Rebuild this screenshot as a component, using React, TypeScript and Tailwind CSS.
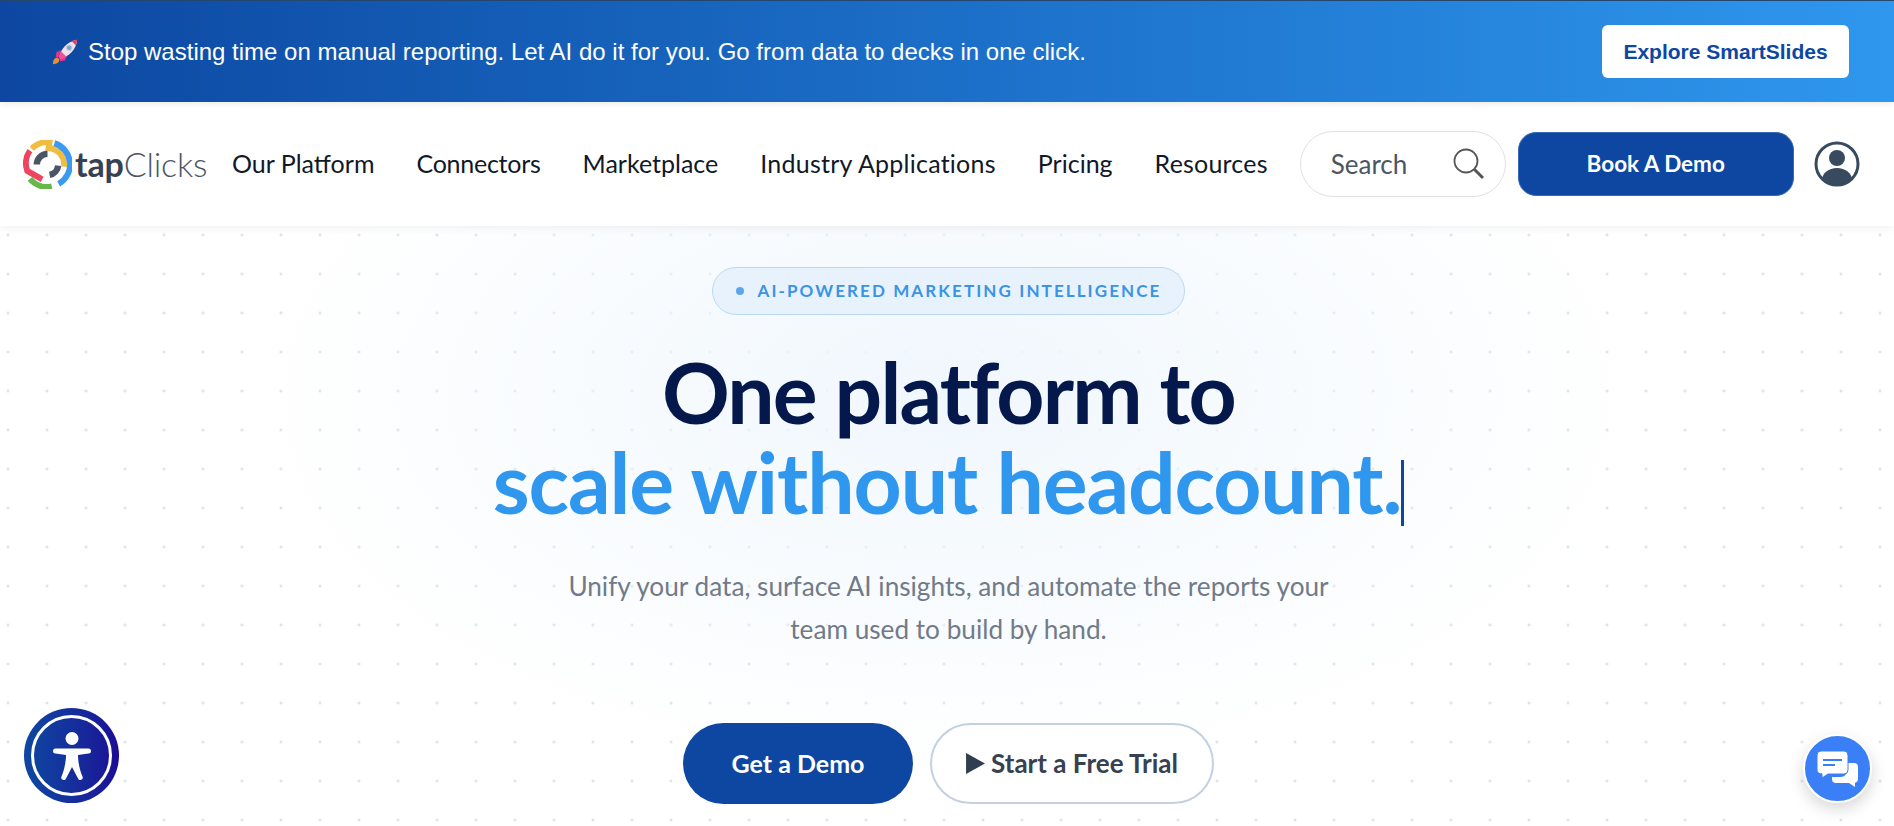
const navLinks = [
  { label: "Our Platform", cls: "" },
  { label: "Connectors", cls: "tracking-[-0.25px]" },
  { label: "Marketplace", cls: "" },
  { label: "Industry Applications", cls: "tracking-[0.25px]" },
  { label: "Pricing", cls: "" },
  { label: "Resources", cls: "tracking-[0.2px]" },
];

function Rocket() {
  return (
    <svg viewBox="0 0 30 30" className="w-[28px] h-[28px] shrink-0">
      <path d="M2 28c0-4 2-7 5-7l2 2c0 3-3 5-7 5z" fill="#e8912c" />
      <path d="M6 15l5-2-3 8-3-1z" fill="#e8338a" />
      <path d="M15 24l2-5-8 3 1 3z" fill="#e8338a" />
      <path d="M9 21C10 12 17 4 28 2c-1 11-9 18-18 20z" fill="#f3dfe6" />
      <path d="M22 3.2L28 2c-.2 2-.6 4-1.400 5.800z" fill="#ee3b5b" />
      <path d="M8.500 20C9 18 10 16 11 14.500l5.500 5.500c-1.500 1-3.500 1.900-5.500 2.400z" fill="#f0509a" />
      <circle cx="19.500" cy="10.500" r="3" fill="#7fa6d8" stroke="#c9d5e8" strokeWidth="1" />
    </svg>
  );
}

function Logo() {
  return (
    <div className="flex items-center w-[185px] shrink-0">
      <svg viewBox="1 1 46 46" className="w-[49px] h-[49px] shrink-0" fill="none" strokeWidth="5.500">
        <path d="M9.200 9.200A21 21 0 0 1 26 3.100L25 8.500A15.500 15.500 0 0 1 39.500 26" stroke="#f0bd42" />
        <path d="M30.500 3.900A21 21 0 0 1 34.500 42.200" stroke="#3b9af0" />
        <path d="M7.500 37.500A21 21 0 0 0 28 44.600" stroke="#66b84a" />
        <path d="M7.500 11A21 21 0 0 0 5 30L19 38" stroke="#ef4460" />
        <path d="M14 24A10 10 0 0 1 24 14" stroke="#4b5563" strokeWidth="6" />
        <path d="M34 25A10 10 0 0 1 26 33.800" stroke="#4b5563" strokeWidth="6" />
      </svg>
      <span className="ml-[3px] text-[34px] leading-none text-[#374151] tracking-[-0.2px]">
        <span className="font-bold">tap</span>
        <span className="font-light text-[#4b5563]">Clicks</span>
      </span>
    </div>
  );
}

function SearchIcon() {
  return (
    <svg viewBox="0 0 32 32" className="w-[32px] h-[32px] shrink-0" fill="none" stroke="#555">
      <circle cx="13" cy="13" r="11.500" strokeWidth="1.800" />
      <path d="M21.500 21.500l8.500 8.500" strokeWidth="3" />
    </svg>
  );
}

function UserIcon() {
  return (
    <svg viewBox="0 0 46 46" className="w-[46px] h-[46px]">
      <defs>
        <clipPath id="userClip">
          <circle cx="23" cy="23" r="20.500" />
        </clipPath>
      </defs>
      <circle cx="23" cy="23" r="21" fill="white" stroke="#374a5e" strokeWidth="3" />
      <circle cx="23" cy="17" r="8" fill="#374a5e" />
      <ellipse cx="23" cy="39" rx="15" ry="12" fill="#374a5e" clipPath="url(#userClip)" />
    </svg>
  );
}

function A11yButton() {
  return (
    <div className="fixed left-[24px] bottom-[23px] w-[95px] h-[95px] rounded-full bg-gradient-to-r from-[#0d47a1] to-[#1b0a96] flex items-center justify-center">
      <div className="w-[81px] h-[81px] rounded-full border-[3px] border-white flex items-center justify-center">
        <svg viewBox="0 0 38 48" className="w-[38px] h-[48px]" fill="white">
          <circle cx="19" cy="6.500" r="6.500" />
          <path d="M2.500 16.500H35.500a2.500 2.500 0 0 1 0 5L25 23c0 7 2 16 4.500 21.500a2.400 2.400 0 0 1-4.500 2L19 35l-6 11.500a2.400 2.400 0 0 1-4.500-2C11 39 13 30 13 23L2.500 21.500a2.500 2.500 0 0 1 0-5z" />
        </svg>
      </div>
    </div>
  );
}

function ChatButton() {
  return (
    <div className="fixed right-[22px] bottom-[23px] w-[69px] h-[69px] rounded-full bg-[#3b7ff6] border-[2px] border-white shadow-[0_6px_16px_rgba(0,0,0,0.16)] flex items-center justify-center">
      <svg viewBox="0 0 42 36" className="w-[42px] h-[36px]" fill="white">
        <path d="M24 12h13a4 4 0 0 1 4 4v12a4 4 0 0 1-3 3.800V36l-6-4H19a4 4 0 0 1-4-4v-2h9a6 6 0 0 0 6-6v-8z" />
        <path d="M4 0h23a4 4 0 0 1 4 4v15a4 4 0 0 1-4 4H11l-6 4v-4.200A4 4 0 0 1 0 19V4a4 4 0 0 1 4-4z" stroke="#3b7ff6" strokeWidth="1" />
        <path d="M6 8h19v2H6zM6 13h12v2H6z" fill="#3b7ff6" />
      </svg>
    </div>
  );
}

export default function App() {
  return (
    <div className="h-[826px] overflow-hidden bg-white font-['Lato',sans-serif]">
      {/* promo banner */}
      <div className="relative z-20 h-[102px] border-t border-[#24466f] bg-gradient-to-r from-[#0d47a1] to-[#2f97ee] shadow-[0_2px_6px_rgba(0,0,0,0.08)] flex items-center pl-[51px] pr-[45px]">
        <Rocket />
        <p className="ml-[9px] text-[24px] text-white font-['Liberation_Sans',sans-serif]">
          Stop wasting time on manual reporting. Let AI do it for you. Go from data to decks in one click.
        </p>
        <button className="ml-auto h-[53px] w-[247px] rounded-[6px] bg-white text-[#0d47a1] text-[21px] font-bold font-['Liberation_Sans',sans-serif]">
          Explore SmartSlides
        </button>
      </div>

      {/* main nav */}
      <header className="relative z-10 h-[124px] bg-white shadow-[0_2px_8px_rgba(0,0,0,0.06)] flex items-center pl-[23px]">
        <Logo />
        <nav className="ml-[24px] flex items-center gap-[42px] text-[25px] text-[#111827]">
          {navLinks.map((l) => (
            <a key={l.label} className={`whitespace-nowrap ${l.cls}`}>{l.label}</a>
          ))}
        </nav>
        <div className="ml-[32px] w-[206px] h-[66px] rounded-full border border-[#e1e1e1] flex items-center pl-[30px] pr-[20px] justify-between">
          <span className="text-[26px] text-[#4b5563]">Search</span>
          <SearchIcon />
        </div>
        <button className="ml-[12px] w-[276px] h-[64px] rounded-[18px] bg-[#0d47a1] border border-[#3a6bb8] text-white text-[22.5px] font-bold">Book A Demo</button>
        <div className="ml-[20px]"><UserIcon /></div>
      </header>

      {/* hero */}
      <section className="h-[600px] pl-[3px] flex flex-col items-center bg-[radial-gradient(ellipse_700px_380px_at_50%_170px,#f0f7fd,transparent),radial-gradient(circle,#d9dfe6_1.2px,transparent_1.5px)] bg-[size:100%_100%,39px_39px] bg-[position:0_0,-11.5px_-10.5px]">
        <div className="mt-[41px] h-[48px] w-[473px] rounded-full border border-[#bcd9f3] bg-[#e3f0fb]/80 flex items-center justify-center gap-[14px]">
          <span className="w-[8px] h-[8px] rounded-full bg-[#5ba7ef]" />
          <span className="text-[17px] font-bold tracking-[2.1px] uppercase text-[#3b93e6]">AI-Powered Marketing Intelligence</span>
        </div>
        <h1 className="mt-[32px] text-center text-[84px] leading-[90px] font-bold tracking-[-1.1px] text-[#04184c]">
          <span className="tracking-[-1.8px]">One platform to</span>
          <br />
          <span className="text-[#2f97ee] inline-flex items-center">
            scale without headcount.
            <span className="mt-[22px] w-[3px] h-[66px] bg-[#0d47a1]" />
          </span>
        </h1>
        <p className="mt-[38px] w-[800px] text-center text-[26.2px] leading-[43px] text-[#717a88]">
          Unify your data, surface AI insights, and automate the reports your
          <br />
          team used to build by hand.
        </p>
        <div className="mt-[72px] flex gap-[17px]">
          <button className="w-[230px] h-[81px] rounded-full bg-[#0d47a1] text-white text-[25px] font-bold">Get a Demo</button>
          <button className="w-[284px] h-[81px] rounded-full border-2 border-[#c5cfe4] bg-white text-[#374151] text-[26px] font-bold flex items-center justify-center gap-[6px]">
            <svg viewBox="0 0 18 20" className="w-[19px] h-[21px]"><path d="M0 0l18 10L0 20z" fill="#2f3e50" /></svg>
            Start a Free Trial
          </button>
        </div>
      </section>

      <A11yButton />
      <ChatButton />
    </div>
  );
}
